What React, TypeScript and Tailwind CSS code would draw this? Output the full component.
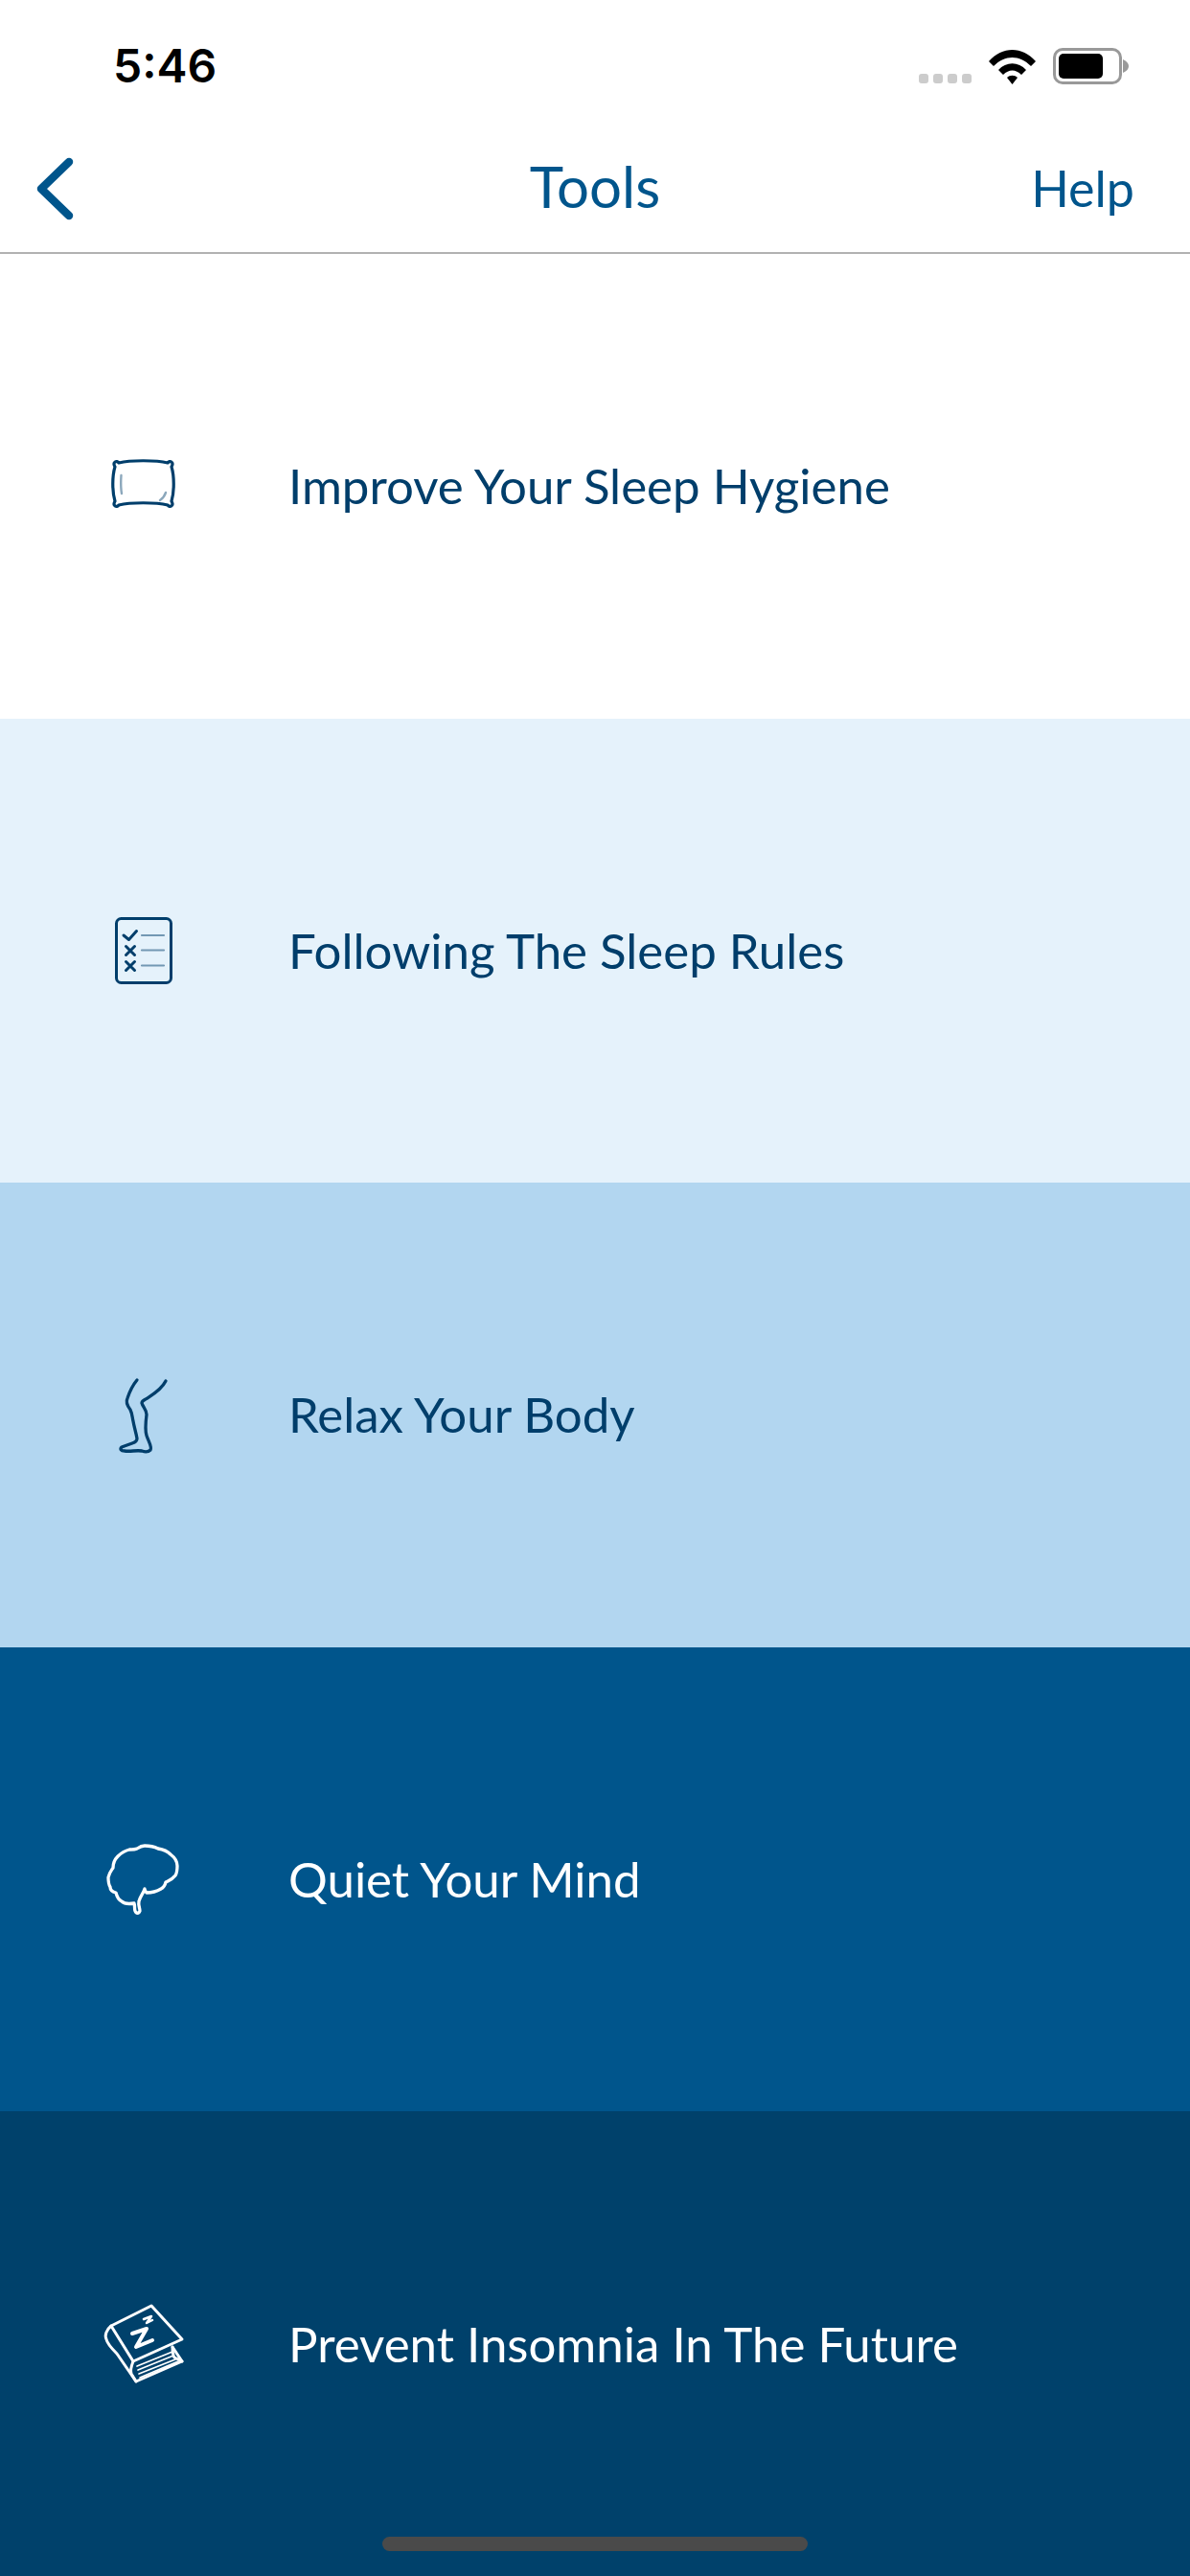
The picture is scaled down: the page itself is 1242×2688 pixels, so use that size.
import React from "react";

const lato = "font-['Lato',sans-serif]";

const PillowIcon = () => (
  <svg width="120" height="100" viewBox="0 7 120 100" fill="none" stroke="#003e6b" strokeLinecap="round" strokeLinejoin="round">
    <path strokeWidth="3.2" d="M34 33 C46 30 73 30 85 33 C87 30 92 32 89 37 C92 47 92 63 89 73 C92 78 87 80 85 77 C73 74 46 74 34 77 C32 80 27 78 30 73 C27 63 27 47 30 37 C27 32 32 30 34 33 Z" />
    <path strokeWidth="2.4" opacity="0.45" d="M36.5 46 C36 53 36 59 37 65" />
    <path strokeWidth="2.4" opacity="0.45" d="M77 72 C80 70 82 67 83 64" />
  </svg>
);

const ChecklistIcon = () => (
  <svg width="120" height="100" viewBox="0 1 120 100" fill="none" stroke="#003e6b" strokeLinecap="round" strokeLinejoin="round">
    <rect x="31.5" y="17.5" width="57" height="67" rx="5" strokeWidth="3" />
    <path strokeWidth="3" d="M39 35 L44.5 39.5 L52.5 30.5 M41.5 46.5 L50.5 55.5 M50.5 46.5 L41.5 55.5 M41.5 62.5 L50.5 71.5 M50.5 62.5 L41.5 71.5" />
    <path strokeWidth="2.2" opacity="0.5" d="M58 35 H81 M58 50.5 H81 M58 66.5 H81" />
  </svg>
);

const LegIcon = () => (
  <svg width="120" height="100" viewBox="0 0 120 100" fill="none" stroke="#003e6b" strokeWidth="3.3" strokeLinecap="round" strokeLinejoin="round">
    <path d="M53 14 C48 20 45 27 43 33 C41 37 43 41 46 45 C48 49 48 53 49 57 C50 63 52 69 53 75 C53 78 51 79 48 80 L37 84 C35 86 36 88 40 88 C46 89 52 87 58 88 C61 89 65 89 67 87 C69 84 65 78 63 72 C61 66 62 58 63 50 C63 45 59 42 58 38 C58 36 60 35 62 34 C68 30 78 25 83 15" />
  </svg>
);

const BrainIcon = () => (
  <svg width="120" height="100" viewBox="0 -1 120 100" fill="none" stroke="#fff" strokeWidth="3.3" strokeLinecap="round" strokeLinejoin="round">
    <path d="M50 74 C44 75 39 74 37 72 C33 70 32 67 31 63 C27 62 25 60 25 57 C23 54 23 50 23 47 C24 42 26 40 28 37 C28 31 30 28 33 25 C37 21 41 19 45 18 C48 18 51 18 53 17 C56 15 58 14 61 14 C66 14 71 15 75 17 C81 18 85 20 88 23 C92 26 95 31 95 35 C95 39 95 42 93 45 C90 49 87 50 83 52 C82 56 80 58 78 59 C73 62 68 63 63 63 C62 62 61 60 61 59 C60 63 56 67 55 72 C54 76 56 79 56 82 C55 85 52 85 51 82 C50 79 51 77 50 74 Z" />
  </svg>
);

const BookIcon = () => (
  <svg width="120" height="100" viewBox="0 4 120 100" fill="none" stroke="#fff" strokeLinecap="round" strokeLinejoin="round">
    <path strokeWidth="3" d="M26 35 L68 14 L100 49 L49 72 Z" />
    <path strokeWidth="3" d="M26 35 C21 39 19 45 21 49 C22 54 27 59 32 64 L52 93 L100 72 L90 57" />
    <path strokeWidth="3" d="M49 72 C47 77 46 82 47 85 L52 93 M90 57 C90 61 90 65 92 68 L100 72" />
    <path strokeWidth="1.7" d="M53 77 L90 62 M54 81 L91 66 M55 85 L93 70 M56 89 L96 72" />
    <path strokeWidth="4" d="M48 43 L63 38 L52 57 L69 50" />
    <path strokeWidth="2.5" d="M60 28 L68 25 L63 32 L69 29" />
  </svg>
);

const rows = [
  { title: "Improve Your Sleep Hygiene", bg: "bg-white", text: "text-[#003e6b]", icon: <PillowIcon /> },
  { title: "Following The Sleep Rules", bg: "bg-[#e5f2fb]", text: "text-[#003e6b]", icon: <ChecklistIcon /> },
  { title: "Relax Your Body", bg: "bg-[#b2d6f0]", text: "text-[#003e6b]", icon: <LegIcon /> },
  { title: "Quiet Your Mind", bg: "bg-[#00558c]", text: "text-white", icon: <BrainIcon /> },
  { title: "Prevent Insomnia In The Future", bg: "bg-[#00416b]", text: "text-white", icon: <BookIcon /> },
];

export default function App() {
  return (
    <div className={`relative w-[1242px] h-[2688px] flex flex-col bg-white overflow-hidden ${lato}`}>
      {/* STATUS BAR */}
      <div className="h-[132px] shrink-0 pl-[118px] pr-[64px] pt-[40px] flex justify-between items-start">
        <span className="font-['Inter',sans-serif] font-semibold text-[48px] leading-[58px] text-black">5:46</span>
        <div className="flex items-end gap-[18px] pt-[10px]">
          <div className="flex gap-[5px] pb-px">
            <span className="w-[10px] h-[10px] rounded-[3px] bg-[#cccccc]" />
            <span className="w-[10px] h-[10px] rounded-[3px] bg-[#cccccc]" />
            <span className="w-[10px] h-[10px] rounded-[3px] bg-[#cccccc]" />
            <span className="w-[10px] h-[10px] rounded-[3px] bg-[#cccccc]" />
          </div>
          <svg width="49" height="36" viewBox="0 0 49 36">
            <path d="M0 12 C14 -4 35 -4 49 12 L44 17 C32 5 17 5 5 17 Z" fill="#000" />
            <path d="M10 21 C18 12 31 12 39 21 L34 26 C28 20 21 20 15 26 Z" fill="#000" />
            <path d="M19 29 C22 26 27 26 30 29 L24.5 36 Z" fill="#000" />
          </svg>
          <div className="flex items-center">
            <div className="w-[72px] h-[38px] rounded-[10px] border-[3px] border-[#999999] p-[3px]">
              <div className="w-[46px] h-full rounded-[5px] bg-black" />
            </div>
            <svg width="6" height="14" viewBox="0 0 6 14" className="ml-px">
              <path d="M0 0 C4 2 6 4 6 7 C6 10 4 12 0 14 Z" fill="#999999" />
            </svg>
          </div>
        </div>
      </div>

      {/* NAV */}
      <div className="h-[133px] shrink-0 relative flex items-center justify-between pl-[36px] pr-[58px] border-b-2 border-[#b2b2b2]">
        <svg width="42" height="66" viewBox="0 0 42 66" fill="none" className="-mt-[2px]">
          <path d="M36 5 L7 33 L36 61" stroke="#00558c" strokeWidth="8.5" strokeLinecap="round" strokeLinejoin="round" />
        </svg>
        <span className="absolute left-0 right-0 text-center text-[60px] leading-[68px] text-[#00558c] -mt-[8px]">Tools</span>
        <span className="text-[52px] leading-[60px] text-[#00558c] -mt-[3px]">Help</span>
      </div>

      {/* TOOL ROWS */}
      {rows.map((row) => (
        <div key={row.title} className={`flex-1 flex items-center pl-[90px] ${row.bg}`}>
          <div className="w-[120px] flex items-center justify-center shrink-0">{row.icon}</div>
          <span className={`ml-[91px] text-[51px] leading-[60px] ${row.text}`}>{row.title}</span>
        </div>
      ))}

      {/* HOME INDICATOR */}
      <div className="absolute left-[399px] bottom-[26px] w-[444px] h-[15px] rounded-full bg-[#4a4a4a]" />
    </div>
  );
}
